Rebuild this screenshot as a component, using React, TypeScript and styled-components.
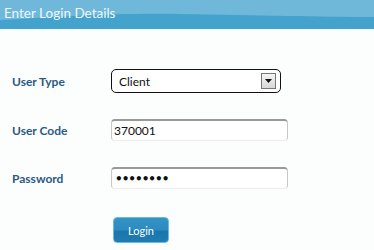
import React from "react";
import styled, { createGlobalStyle } from "styled-components";

const Global = createGlobalStyle`
  html, body { margin: 0; padding: 0; background: #fcfefe; }
  body { font-family: Lato, "Open Sans", sans-serif; }
`;

const Page = styled.div`
  width: 374px;
  height: 250px;
  background: #fcfefe;
  overflow: hidden;
`;

const Header = styled.div`
  position: relative;
  height: 29px;
  background: #6fb8da;
  overflow: hidden;
`;

const Wave = styled.svg`
  position: absolute;
  left: 0;
  top: 0;
`;

const Title = styled.div`
  position: relative;
  padding: 5px 0 0 4px;
  font-size: 13.5px;
  color: #eef7fb;
  line-height: 17px;
`;

const Form = styled.div`
  display: grid;
  grid-template-columns: 99px auto;
  row-gap: 26px;
  align-items: center;
  padding: 40px 0 0 12px;
`;

const Label = styled.div`
  font-size: 12px;
  font-weight: bold;
  color: #2b5a84;
`;

const Select = styled.div`
  box-sizing: border-box;
  width: 170px;
  height: 24px;
  border: 1px solid #111;
  border-radius: 5px;
  background: #fff;
  display: flex;
  align-items: center;
  justify-content: space-between;
  padding: 0 4px 0 7px;
  font-size: 12px;
  color: #111;
`;

const ArrowBox = styled.div`
  box-sizing: border-box;
  width: 15px;
  height: 16px;
  border: 1px solid #777;
  background: linear-gradient(#f4f4f4, #d8d8d8);
  display: flex;
  align-items: center;
  justify-content: center;
`;

const Input = styled.div`
  box-sizing: border-box;
  width: 177px;
  height: 22px;
  border: 1px solid #c8c8c8;
  border-top: 2px solid #999;
  border-bottom-color: #ececec;
  border-radius: 4px;
  background: #fff;
  display: flex;
  align-items: center;
  padding-left: 2px;
  font-size: 12px;
  color: #111;
`;

const Dots = styled.span`
  font-family: "DejaVu Sans", sans-serif;
  font-size: 12px;
  font-weight: bold;
  letter-spacing: -1px;
  padding-left: 1px;
`;

const ButtonRow = styled.div`
  grid-column: 2;
  padding-left: 2px;
  margin-top: 2px;
`;

const Button = styled.div`
  box-sizing: border-box;
  width: 56px;
  height: 26px;
  border: 1px solid #6bbbe0;
  border-radius: 4px;
  background: linear-gradient(#3594c6 0%, #2b8ac0 50%, #1a76ad 55%, #1f7db3 100%);
  color: #fff;
  font-size: 11px;
  display: flex;
  align-items: center;
  justify-content: center;
`;

export default function App() {
  return (
    <Page>
      <Global />
      <Header>
        <Wave width="374" height="29" viewBox="0 0 374 29">
          <path d="M0 20 C 60 17, 110 13, 180 14 C 260 15, 320 17, 374 17 L374 29 L0 29 Z" fill="#44a3cc" />
        </Wave>
        <Title>Enter Login Details</Title>
      </Header>
      <Form>
        <Label>User Type</Label>
        <Select>
          <span>Client</span>
          <ArrowBox>
            <svg width="7" height="4" viewBox="0 0 7 4">
              <path d="M0 0 H7 L3.5 4 Z" fill="#111" />
            </svg>
          </ArrowBox>
        </Select>
        <Label>User Code</Label>
        <Input>370001</Input>
        <Label>Password</Label>
        <Input>
          <Dots>••••••••</Dots>
        </Input>
        <ButtonRow>
          <Button>Login</Button>
        </ButtonRow>
      </Form>
    </Page>
  );
}
